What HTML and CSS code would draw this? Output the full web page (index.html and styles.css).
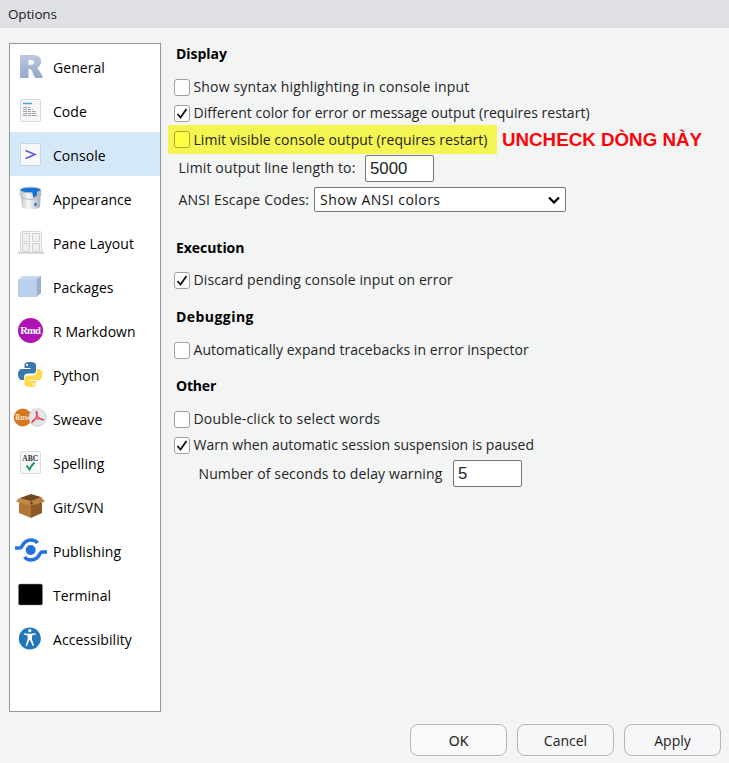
FILE: index.html
```html
<!DOCTYPE html>
<html lang="en">
<head>
<meta charset="utf-8">
<title>Options</title>
<link rel="stylesheet" href="styles.css">
</head>
<body>
<div class="dialog">
<header class="titlebar">Options</header>
<div class="content">
<nav class="sidebar">
<a class="item"><svg class="icon" viewBox="0 0 34 32"><defs><linearGradient id="r" x2="0" y2="1"><stop offset="0" stop-color="#bcc8e0"/><stop offset="1" stop-color="#98a7ca"/></linearGradient></defs><path fill="url(#r)" fill-rule="evenodd" d="M6 5h13.500c9 0 10 10 3.500 12.800 2 1.700 3.500 6.200 5.500 7.700V28h-7c-2.500-2-3-8.500-5.500-9h-1.500v9H6zM14.500 10v4.800h3c3.600 0 3.600-4.800 0-4.800z"/></svg><span>General</span></a>
<a class="item"><svg class="icon" viewBox="0 0 34 32"><rect x="6.500" y="5.500" width="20" height="22" rx="1" fill="#f5f6f8" stroke="#d5dae1"/><path stroke="#4ba9d8" stroke-width="1.500" d="M9 9.500h9"/><path stroke="#9ba2aa" stroke-dasharray="4 1 3 1" d="M9 13.500h7M9 15.500h10M9 17.500h13M9 19.500h14M9 21.500h15"/></svg><span>Code</span></a>
<a class="item selected"><svg class="icon" viewBox="0 0 34 32"><rect x="6.500" y="5.500" width="20" height="22" rx="1" fill="#f7f8fc" stroke="#c6d4e5"/><path fill="none" stroke="#5c57dc" stroke-width="1.500" d="M11.500 12.500l9.500 4-9.500 4"/></svg><span>Console</span></a>
<a class="item"><svg class="icon" viewBox="0 0 34 32"><defs><linearGradient id="b"><stop stop-color="#b9bec5"/><stop offset=".4" stop-color="#f8f8f9"/><stop offset="1" stop-color="#a7adb4"/></linearGradient></defs><path fill="url(#b)" d="M6 8h21l-1 17c-3 3-15 3-18 0z"/><ellipse cx="16.500" cy="8" rx="10.500" ry="2.800" fill="#1674d7" stroke="#b5bdc7"/><path fill="#1674d7" d="M18 9h5v4c0 2-2 2-2 0v1c0 2-2 2-2 0zM20.500 21h2v3h-2z"/><path fill="none" stroke="#b5bac0" d="M5.500 11c1 8 20 9 22 0"/></svg><span>Appearance</span></a>
<a class="item"><svg class="icon" viewBox="0 0 34 32"><path fill="#dadce0" stroke="#c8cbd0" stroke-width=".6" d="M3.500 27.500l3-3h21l3 3z"/><rect x="6.500" y="5.500" width="21" height="21" rx="2" fill="#f7f7f8" stroke="#d2d4d8"/><path fill="#f0f0f2" stroke="#cfd1d5" d="M8.500 7.500h7v8h-7zm10 0h7v8h-7zm-10 10h7v8h-7zm10 0h7v8h-7z"/></svg><span>Pane Layout</span></a>
<a class="item"><svg class="icon" viewBox="0 0 34 32"><path fill="#c9d9ef" d="M4 10l4-4h19l-4 4z"/><path fill="#bacfeb" d="M4 9.500h18.500V27H4z"/><path fill="#95afd3" d="M22.500 9.500L27 6v17l-4.500 4z"/></svg><span>Packages</span></a>
<a class="item"><svg class="icon" viewBox="0 0 34 32"><circle cx="16.500" cy="16.500" r="12.500" fill="#ae12b4"/><text x="6.300" y="20" class="rmd" textLength="20.500">Rmd</text></svg><span>R Markdown</span></a>
<a class="item"><svg class="icon" viewBox="0 0 34 32"><g transform="translate(4 4)"><path fill="#3977ac" fill-rule="evenodd" d="M12 0C7 0 6.500 1.500 6.500 3v3h6v1H4C1.500 7 0 9 0 12.500S1.500 18 4 18h2v-3c0-2 1.500-3.500 4-3.500h5.500C17 11.500 18 10 18 8.500V3c0-2-2-3-6-3zM9 1.800a1.100 1.100 0 1 1 0 2.200 1.100 1.100 0 0 1 0-2.200z"/><path fill="#ffd94f" fill-rule="evenodd" transform="rotate(180 12.200 12.500)" d="M12 0C7 0 6.500 1.500 6.500 3v3h6v1H4C1.500 7 0 9 0 12.500S1.500 18 4 18h2v-3c0-2 1.500-3.500 4-3.500h5.500C17 11.500 18 10 18 8.500V3c0-2-2-3-6-3zM9 1.800a1.100 1.100 0 1 1 0 2.200 1.100 1.100 0 0 1 0-2.200z"/></g></svg><span>Python</span></a>
<a class="item"><svg class="icon" viewBox="0 0 34 32"><circle cx="8.800" cy="15.500" r="9" fill="#d57820"/><text x="1.300" y="18.200" class="rnw" textLength="14.500" lengthAdjust="spacingAndGlyphs">Rnw</text><circle cx="23.500" cy="15.500" r="8.700" fill="#e3e6eb" stroke="#b9bec8" stroke-width=".7"/><path fill="none" stroke="#e2434b" stroke-width="1.200" d="M22.500 9c2 3-1 9-5 12M22.500 9c-1 5 3 9 7.500 9M18 19c4-3 8-3 12-1"/></svg><span>Sweave</span></a>
<a class="item"><svg class="icon" viewBox="0 0 34 32"><rect x="6.500" y="5.500" width="20" height="22" rx="1" fill="#f7f8f9" stroke="#d8dbe0"/><text x="8.300" y="14.500" class="abc" textLength="16" lengthAdjust="spacingAndGlyphs">ABC</text><path fill="none" stroke="#17936a" stroke-width="1.900" d="M12.500 19.500l3 4c1-3 3-5 5-7"/></svg><span>Spelling</span></a>
<a class="item"><svg class="icon" viewBox="0 0 34 32"><path fill="#704820" d="M6 8l11-4 10 3 1 5-12 3z"/><path fill="#b07638" d="M5 11l12 4v13L5 23z"/><path fill="#8f5a28" d="M17 15l11-4v12l-11 5z"/><path fill="#c18a4b" d="M5 8l12 3-1.500 4.500L2 11.500z"/><path fill="#b98043" d="M27 7l4 4.500-11 3.500-3-4z"/></svg><span>Git/SVN</span></a>
<a class="item"><svg class="icon" viewBox="0 0 34 32"><circle cx="16.700" cy="16" r="5" fill="#2472e0"/><path fill="none" stroke="#2472e0" stroke-width="3.500" d="M1 14h5c3 0 2-8 11-8 3 0 5 1 6.500 3M33 18h-5c-3 0-2 8-11 8-3 0-5-1-6.500-3"/></svg><span>Publishing</span></a>
<a class="item"><svg class="icon" viewBox="0 0 34 32"><rect x="4.500" y="6" width="24" height="21" rx="1.500" fill="#000" stroke="#888" stroke-width=".5"/></svg><span>Terminal</span></a>
<a class="item"><svg class="icon" viewBox="0 0 34 32"><circle cx="15.800" cy="16.500" r="11" fill="#2376b8"/><circle cx="15.800" cy="8.700" r="1.600" fill="#fff"/><path fill="#fff" d="M10 11.200l4.500 .6h2.600l4.500-.6.2 1.200-3.800 1v4l2 6.200-1.300.5-2.600-6h-.6l-2.600 6-1.300-.5 2-6.200v-4l-3.800-1z"/></svg><span>Accessibility</span></a>
</nav>
<main class="panel">
<h2>Display</h2>
<label class="row"><i class="box"></i><span class="t1">Show syntax highlighting in console input</span></label>
<label class="row"><i class="box"><svg viewBox="0 0 16 17"><path d="M3.500 9l3 3.500L12.500 4"/></svg></i><span class="t2">Different color for error or message output (requires restart)</span></label>
<div class="marked"><label class="row highlight"><i class="box"></i><span class="t3">Limit visible console output (requires restart)</span></label><strong>UNCHECK DÒNG NÀY</strong></div>
<div class="field length"><span class="t4">Limit output line length to:</span><div class="input">5000</div></div>
<div class="field ansi"><span class="t5">ANSI Escape Codes:</span><div class="select"><span class="t6">Show ANSI colors</span><svg viewBox="0 0 12 8"><path d="M1 1.500l5 5 5-5"/></svg></div></div>
<h2 class="execution">Execution</h2>
<label class="row"><i class="box"><svg viewBox="0 0 16 17"><path d="M3.500 9l3 3.500L12.500 4"/></svg></i><span class="t7">Discard pending console input on error</span></label>
<h2 class="debugging">Debugging</h2>
<label class="row"><i class="box"></i><span class="t8">Automatically expand tracebacks in error inspector</span></label>
<h2 class="other">Other</h2>
<label class="row"><i class="box"></i><span class="t9">Double-click to select words</span></label>
<label class="row"><i class="box"><svg viewBox="0 0 16 17"><path d="M3.500 9l3 3.500L12.500 4"/></svg></i><span class="t10">Warn when automatic session suspension is paused</span></label>
<div class="field delay"><span class="t11">Number of seconds to delay warning</span><div class="input">5</div></div>
</main>
</div>
<footer class="buttons"><button class="ok">OK</button><button>Cancel</button><button>Apply</button></footer>
</div>
</body>
</html>
```
FILE: styles.css
```css
* { box-sizing: border-box; }
body { margin: 0; background: #f3f4f4; color: #000; font: 14px/20px "Open Sans", "Noto Sans", sans-serif; }
.dialog { width: 729px; height: 763px; overflow: hidden; display: flex; flex-direction: column; }
.titlebar { height: 28px; padding: 4px 8px; background: #dfe0e4; color: #222; font-size: 13.5px; letter-spacing: -.15px; }
.content { height: 684px; display: flex; padding: 0 0 0 9px; white-space: nowrap; }
.sidebar { width: 152px; height: 669px; margin-top: 15px; border: 1px solid #949697; background: #fff; }
.item { height: 44px; display: flex; align-items: center; padding-left: 4px; letter-spacing: .05px; }
.item span { padding-top: 3px; }
.icon { width: 34px; height: 32px; margin-right: 5px; flex: none; }
.selected { background: #d5e8f7; }
.rmd { font: bold 10.5px "Liberation Serif", serif; fill: #fff; letter-spacing: 0; }
.rnw { font: bold 8px "Liberation Serif", serif; fill: #fbe8d4; letter-spacing: 0; }
.abc { font: bold 7.5px "Liberation Serif", serif; fill: #333; letter-spacing: 0; }
.panel { margin-left: 7px; padding-top: 12px; color: #252525; }
h2 { font-size: 14px; line-height: 20px; font-weight: 700; color: #000; margin: 4px 0 10px 8px; letter-spacing: -.05px; }
.row { height: 26px; display: flex; align-items: center; padding-left: 6px; gap: 3.5px; }
.box { width: 16px; height: 17px; border: 1px solid #a0a0a0; border-radius: 3px; background: #fff; flex: none; display: block; }
.box svg { width: 16px; height: 17px; margin: -1px; display: block; }
.box path { fill: none; stroke: #111; stroke-width: 1.800; }
.marked { display: flex; align-items: center; height: 29px; margin-top: -1px; }
.highlight { width: 329px; height: 29px; background: #f4f552; }
.highlight .box { background: #ffff45; border-color: #b1a52e; }
strong { font: bold 18.750px/24px "Liberation Sans", Arial, sans-serif; color: #fb0509; margin-left: 5px; }
.t1 { letter-spacing: .17px; }
.t2, .t10 { letter-spacing: .025px; }
.t3 { letter-spacing: .04px; }
.t4 { letter-spacing: .15px; }
.t9 { letter-spacing: .18px; }
.t5 { letter-spacing: .17px; }
.t6 { letter-spacing: .45px; }
.t7 { letter-spacing: .1px; }
.t8 { letter-spacing: .06px; }
.t11 { letter-spacing: .12px; }
.field { display: flex; align-items: center; padding-left: 10.5px; }
.input { width: 69px; height: 27px; margin-left: auto; border: 1px solid #767676; border-radius: 2px; background: #fff; color: #222; font: 16.800px/25px "Liberation Sans", Arial, sans-serif; padding-left: 4px; }
.length { width: 266px; height: 27px; margin-top: 1px; }
.length span { margin-top: -1px; }
.ansi { height: 25px; margin-top: 5px; width: 398px; }
.select { width: 252px; height: 25px; margin-left: auto; border: 1px solid #767676; border-radius: 2px; background: #fff; color: #111; display: flex; align-items: center; justify-content: space-between; padding: 0 5px; }
.select svg { width: 12px; height: 8px; }
.select path { fill: none; stroke: #000; stroke-width: 2.200; }
.execution { margin-top: 26px; margin-bottom: 9px; }
.debugging { margin-top: 14px; letter-spacing: .45px; }
.other { margin-top: 13px; letter-spacing: -.2px; }
.delay { height: 27px; margin-top: 2px; padding-left: 30.500px; width: 354px; }
.buttons { display: flex; justify-content: flex-end; gap: 10px; padding: 12px 8px 0 0; }
button { width: 97px; height: 32px; padding: 2px 0 0; border: 1px solid #b6b6b7; border-radius: 8px; background: #f7f6f8; color: #222; font: 14px/20px "Open Sans", sans-serif; }
.ok { background: #f9f9f9; -webkit-text-stroke: .2px #333; }
```
